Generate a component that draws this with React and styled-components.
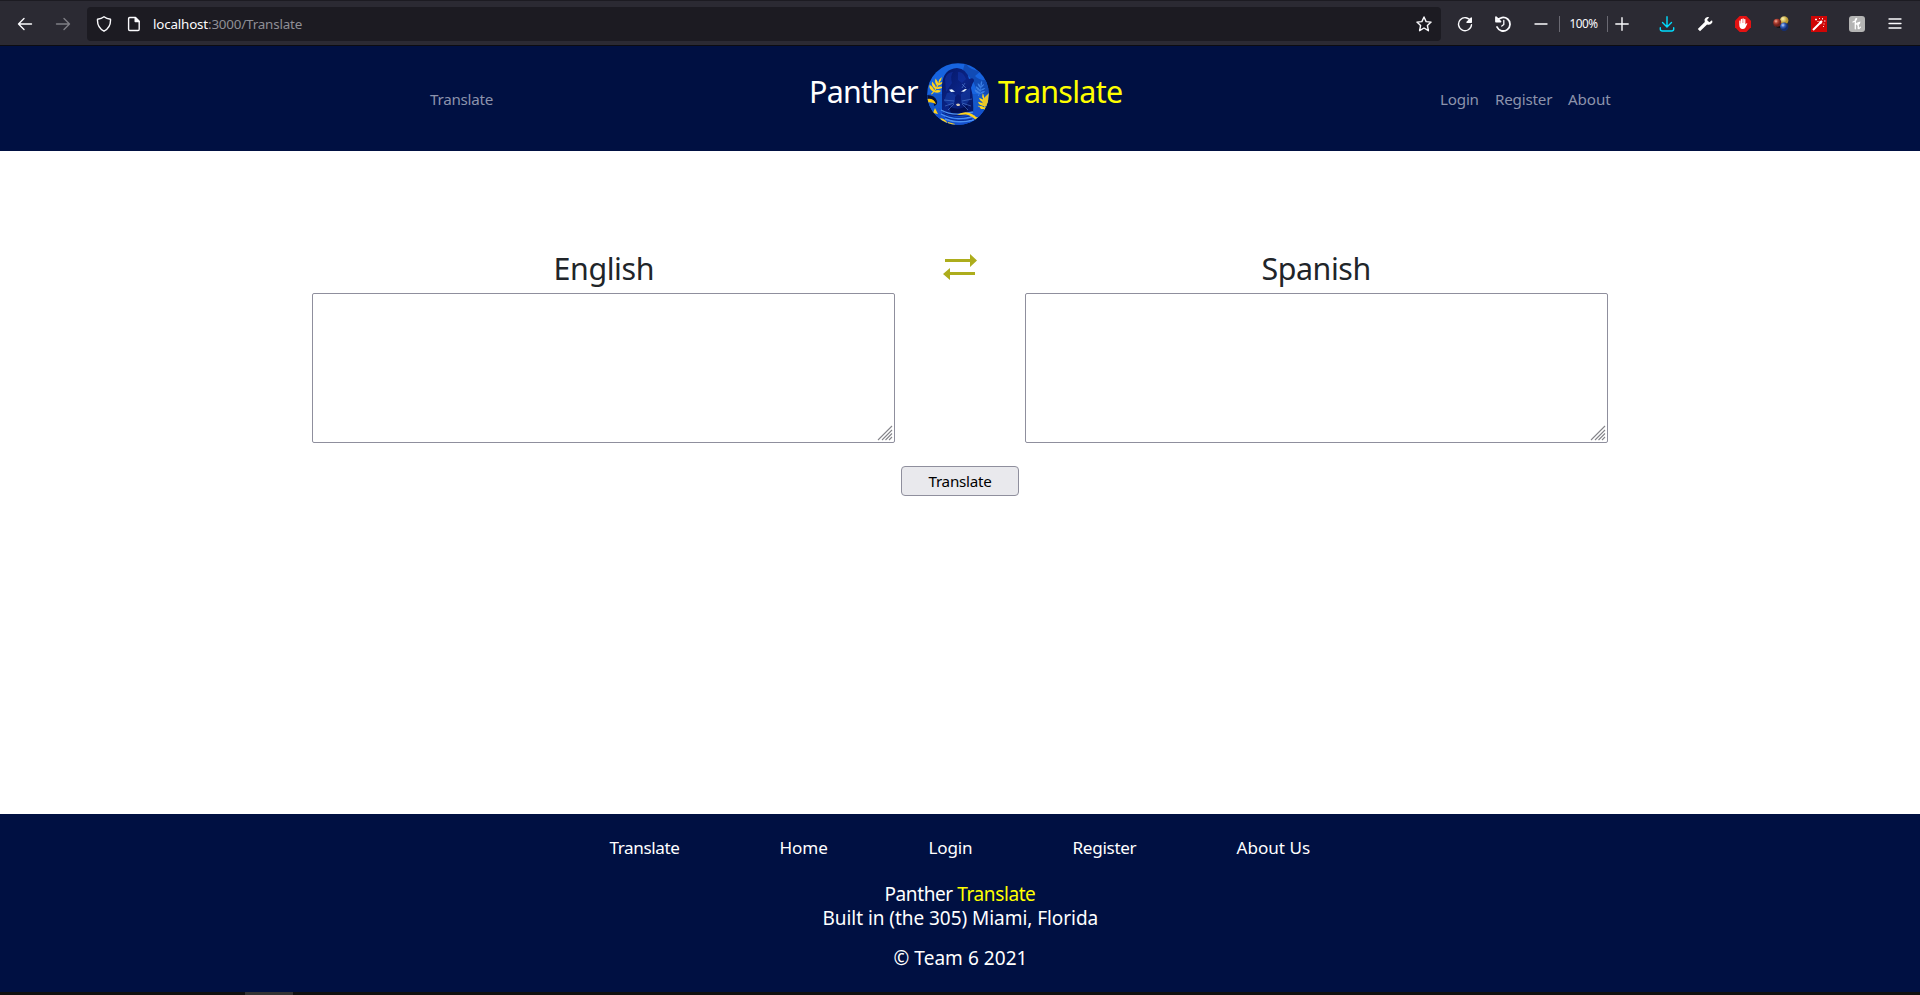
import React from 'react';
import styled, { createGlobalStyle } from 'styled-components';

const GlobalStyle = createGlobalStyle`
  * { box-sizing: border-box; }
  body { margin: 0; background: #fff; font-family: 'Noto Sans', 'Open Sans', sans-serif; overflow: hidden; }
  svg { display: block; }
`;

const Page = styled.div`
  height: 995px;
  display: flex;
  flex-direction: column;
`;

const Text = styled.span`
  display: block;
  flex: none;
  width: ${p => p.$w}px;
  margin: 0 auto;
  font-size: ${p => p.$size}px;
  line-height: ${p => p.$lh || 24}px;
  letter-spacing: ${p => p.$ls || 0}px;
  white-space: nowrap;
  color: ${p => p.$color || 'inherit'};
`;

/* Browser toolbar */
const Toolbar = styled.div`
  flex: none;
  height: 46px;
  display: flex;
  align-items: center;
  padding: 1px 6px 0;
  background: #2b2a33;
  border-top: 1px solid #1c1b22;
  border-bottom: 1px solid #0c0c12;
  color: #fbfbfe;
`;
const Slot = styled.div`
  flex: none;
  width: ${p => p.$w || 38}px;
  height: 34px;
  display: flex;
  align-items: center;
  justify-content: center;
  opacity: ${p => (p.$dim ? 0.4 : 1)};
`;
const AddressBar = styled.div`
  flex: none;
  width: 1354px;
  height: 34px;
  margin: 0 5px;
  display: flex;
  align-items: center;
  border-radius: 4px;
  background: #1c1b22;
`;
const Url = styled.div`
  flex: 1;
  padding: 1px 0 0 4px;
  font-size: 13.4px;
  line-height: 20px;
  letter-spacing: -0.18px;
  color: #8f8f96;
  b { font-weight: 400; color: #fbfbfe; }
`;
const Divider = styled.div`
  width: 1px;
  height: 16px;
  background: #6a6972;
`;
const Zoom = styled.div`
  width: 47px;
  text-align: center;
  font-size: 11.8px;
  line-height: 16px;
  letter-spacing: -0.5px;
  margin-top: -2px;
`;
const Spacer = styled.div`flex: none; width: ${p => p.$w}px;`;

/* Site header */
const Header = styled.header`
  flex: none;
  height: 105px;
  display: flex;
  align-items: flex-start;
  padding-left: 430px;
  background: #001042;
  color: #fff;
`;
const NavLinks = styled.nav`
  display: flex;
  gap: ${p => p.$gap || 0}px;
  padding-top: 41px;
  color: #8c93ac;
`;
const Brand = styled.div`
  display: flex;
  justify-content: space-between;
  width: 314px;
  margin-left: 315px;
  margin-right: 317px;
  padding-top: 17px;
`;
const BrandWord = styled.div`
  flex: none;
  width: ${p => p.$w}px;
  padding-top: 10px;
`;

/* Translator */
const Main = styled.main`
  flex: 1;
  padding-top: 98px;
`;
const Columns = styled.div`
  display: grid;
  grid-template-columns: 583px 130px 583px;
  justify-content: center;
`;
const Heading = styled.h2`
  margin: 0 0 4px;
  font-weight: 400;
  color: #212529;
`;
const Field = styled.div`
  position: relative;
  height: 150px;
`;
const TextArea = styled.textarea`
  display: block;
  width: 100%;
  height: 100%;
  resize: none;
  outline: none;
  border: 1px solid #8f8f9d;
  border-radius: 2px;
  background: #fff;
`;
const Grip = styled.svg`
  position: absolute;
  right: 2px;
  bottom: 2px;
`;
const Swap = styled.div`
  display: flex;
  justify-content: center;
  padding-top: 5px;
`;
const Button = styled.button`
  display: block;
  width: 118px;
  height: 30px;
  margin: 23px auto 0;
  padding: 0;
  border: 1px solid #8f8f9d;
  border-radius: 4px;
  background: #e9e9ed;
  color: #000;
  font-family: inherit;
`;

/* Footer */
const Footer = styled.footer`
  flex: none;
  height: 178px;
  padding-top: 22px;
  background: #001042;
  color: #fff;
`;
const FooterLinks = styled.div`
  display: flex;
  justify-content: center;
  gap: 100px;
  margin-bottom: 22px;
  & > span { margin: 0; }
`;
const Highlight = styled.span`color: #ff0;`;
const Copyright = styled.div`padding-top: 16px;`;
const Taskbar = styled.div`
  flex: none;
  height: 3px;
  padding-left: 245px;
  background: #101010;
`;
const ActiveTask = styled.div`
  width: 48px;
  height: 3px;
  background: #333;
`;

const Line = ({ children, w = 1.4, size = 16 }) => (
  <svg width={size} height={size} viewBox="0 0 16 16" fill="none" stroke="currentColor" strokeWidth={w} strokeLinecap="round" strokeLinejoin="round">{children}</svg>
);

const Leaf = ({ transform, fill }) => (
  <g transform={transform} fill={fill}>
    <path d="M0 0Q3-8 2-17L3-17Q4-8 1 0Z" />
    <path d="M1-3Q-5-4-5-8Q0-7 2-4ZM2-6Q-4-8-4-12Q1-10 3-7ZM2-10Q-2-12-2-16Q2-14 3-11ZM1-3Q7-3 8-7Q4-7 2-4ZM3-7Q7-8 8-11Q4-11 2-7ZM3-11Q6-12 6-16Q3-14 2-11ZM2-14Q1-17 3-20Q4-17 3-14Z" />
  </g>
);

const PantherLogo = () => (
  <svg width="62" height="62" viewBox="0 0 62 62">
    <defs>
      <clipPath id="disc"><circle cx="31" cy="31" r="30.8" /></clipPath>
      <linearGradient id="fur" x1="0" y1="0" x2="1" y2="1">
        <stop offset="0" stopColor="#051663" /><stop offset=".5" stopColor="#0a2385" /><stop offset="1" stopColor="#03135d" />
      </linearGradient>
    </defs>
    <g clipPath="url(#disc)">
      <rect width="62" height="62" fill="#1764df" />
      <path d="M0 31H62V62H0Z" fill="#1458cb" />
      <path d="M38 0Q44 8 54 8L48 13Q52 18 62 17V32L51 30 46 18 36 7Z" fill="#114bb5" />
      <Leaf transform="translate(51 33) rotate(6) scale(.8)" fill="#3b7fe4" />
      <Leaf transform="translate(4 31) rotate(24)" fill="#ffd21b" />
      <path d="M0 32Q8 32 10 38Q11 42 7 43Q8 37 0 36Z" fill="#071139" />
      <path d="M0 36Q7 35 9 41Q3 38 0 40Z" fill="#ffca08" />
      <Leaf transform="translate(57 49) rotate(-12) scale(.93)" fill="#ffda18" />
      <path d="M62 30L56 36 55 42 61 44Z" fill="#e9c729" />
      <path d="M15 22Q16 6 30 5Q40 6 42 16Q47 14 47 18Q45 21 44 25Q47 35 46 53H15Z" fill="url(#fur)" />
      <path d="M18 16Q20 9 26 9Q23 13 25 20L19 29ZM31 9Q36 8 39 16L35 20 31 17Z" fill="#173ab2" opacity=".45" />
      <path d="M20 30L25 29 29 33 28 39 22 42 17 38ZM34 31L43 25 43 36 39 42 34 40Z" fill="#1b47b4" opacity=".45" />
      <path d="M22 43Q31 49 41 42L39 51H24Z" fill="#020f52" />
      <path d="M28 34L31 31 34 34 33 39 31 41 28 39Z" fill="#071b75" />
      <path d="M22 26.8L25 26.2 28 28.7 24 29ZM34 28.5L38 26 40 26.2 37 28.8Z" fill="#e5f4ff" />
      <path d="M29 41.3Q31 40 33 41.2L32.5 43H30Z" fill="#d8c8af" />
      <path d="M27 38L17 37M27 40L18 43M27 41L21 47M35 38L45 36M35 40L44 43M35 41L41 47M35 21L39 25M38 20L35 25" stroke="#5e8fdf" strokeWidth=".5" fill="none" />
      <path d="M12 44Q17 54 32 53T52 43L57 52 45 62H14L8 50Z" fill="#1550cd" />
      <path d="M14 47Q26 54 46 49M14 51Q28 59 48 53M18 56Q30 61 47 57" stroke="#4d91f2" strokeWidth="1.4" fill="none" />
      <path d="M15 50Q28 57 43 53M18 54Q30 60 45 56" stroke="#06288f" strokeWidth=".9" fill="none" />
      <path d="M30 52Q38 47 45 51Q48 54 53 55L50 58Q43 51 38 51.5Z" fill="#ffd21b" />
      <path d="M8 45L11 51 6 50ZM13 55Q19 56 21 61L16 60ZM21 59L28 61 27 63 21 62Z" fill="#ffd21b" />
    </g>
  </svg>
);

const LanguageField = ({ label, width, spacing }) => (
  <div>
    <Heading><Text $w={width} $size={30.4} $lh={40} $ls={spacing}>{label}</Text></Heading>
    <Field>
      <TextArea readOnly aria-label={label} />
      <Grip width="16" height="16" viewBox="0 0 16 16" stroke="#85858b" strokeWidth="1.1">
        <path d="M1 15L15 1M5 15L15 5M8.5 15L15 8.5M12 15L15 12" />
      </Grip>
    </Field>
  </div>
);

export default function App() {
  return (
    <Page>
      <GlobalStyle />
      <Toolbar>
        <Slot><Line><path d="M14.5 8H1.5M7 2.5L1.5 8 7 13.5" /></Line></Slot>
        <Slot $dim><Line><path d="M1.5 8H14.5M9 2.5L14.5 8 9 13.5" /></Line></Slot>
        <AddressBar>
          <Slot $w={34}><Line><path d="M8 .8Q10.5 2.7 14.5 3.2Q15 11.5 8 15.2Q1 11.5 1.5 3.2Q5.5 2.7 8 .8Z" /></Line></Slot>
          <Slot $w={28}><Line><path d="M2.8 1.5H8.5L12.2 5.2V13.2Q12.2 14.5 11 14.5H2.8Q1.6 14.5 1.6 13.2V2.8Q1.6 1.5 2.8 1.5Z" /><path d="M8.2 1.7V5.5H12Z" fill="currentColor" /></Line></Slot>
          <Url><b>localhost</b>:3000/Translate</Url>
          <Slot $w={34}><Line><path d="M8 1L10.1 5.6 15.1 6.1 11.4 9.5 12.4 14.7 8 12 3.6 14.7 4.6 9.5.9 6.1 5.9 5.6Z" /></Line></Slot>
        </AddressBar>
        <Slot><Line><path d="M13.8 5.2A6.5 6.5 0 1 0 14.5 8.7" /><path d="M14.3 2V6.2H10Z" fill="currentColor" /></Line></Slot>
        <Slot><Line w={1.8}><path d="M2.2 5A6.8 6.8 0 1 1 2 11M1 1.2V5.6H5.5Z" /><path d="M8.8 4.5V8.5L6.8 10" strokeWidth="1.3" /></Line></Slot>
        <Slot $w={37}><Line><path d="M2 8H14" /></Line></Slot>
        <Divider /><Zoom>100%</Zoom><Divider />
        <Slot $w={28}><Line><path d="M1.8 8H14.2M8 1.8V14.2" /></Line></Slot>
        <Spacer $w={12} />
        <Slot><svg width="16" height="16" viewBox="0 0 16 16" fill="none" stroke="#00ddff" strokeWidth="1.4" strokeLinecap="round"><path d="M8 .8V10.5M3.5 6.5L8 11 12.5 6.5M1.3 11.8V13Q1.3 15 3.3 15H12.7Q14.7 15 14.7 13V11.8" /></svg></Slot>
        <Slot><svg width="16" height="16" viewBox="0 0 16 16" fill="#fff"><path d="M15 4.2L12.3 6.2 10 3.9 12.2 1.2Q8.7.1 7.5 3.5L7.8 5.9.8 13 3 15.2 10.1 8.5Q13.5 9.3 15.2 6.7Q15.7 5.4 15 4.2Z" /></svg></Slot>
        <Slot><svg width="16" height="16" viewBox="0 0 16 16"><path d="M4.7 0H11.3L16 4.7V11.3L11.3 16H4.7L0 11.3V4.7Z" fill="#e31212" /><path d="M4.3 8.4V4.8Q4.9 4 5.5 4.8V7.4H5.8V3.2Q6.4 2.4 7.1 3.2V7H7.4V2.7Q8.1 2 8.8 2.7V7H9.1V3.3Q9.8 2.6 10.4 3.3V8.4Q11.6 6.9 12.4 7.4L10.5 11.5Q9.5 13 7.5 13Q4.3 12.8 4.3 8.4Z" fill="#fff" /></svg></Slot>
        <Slot><svg width="16" height="16" viewBox="0 0 16 16"><defs><radialGradient id="gold" cx=".35" cy=".3"><stop stopColor="#fff5ae" /><stop offset="1" stopColor="#b99830" /></radialGradient><radialGradient id="red" cx=".35" cy=".3"><stop stopColor="#f5b19b" /><stop offset=".5" stopColor="#b74334" /><stop offset="1" stopColor="#71221c" /></radialGradient><radialGradient id="blue" cx=".35" cy=".3"><stop stopColor="#bdd4ff" /><stop offset=".5" stopColor="#3561bc" /><stop offset="1" stopColor="#142d70" /></radialGradient></defs><ellipse cx="8" cy="10" rx="5" ry="2" fill="#111" /><circle cx="11.2" cy="4.5" r="4.2" fill="url(#gold)" /><circle cx="4.2" cy="6.8" r="4" fill="url(#red)" /><circle cx="11.2" cy="10.8" r="4.2" fill="url(#blue)" /></svg></Slot>
        <Slot><svg width="16" height="16" viewBox="0 0 16 16"><path d="M0 0H16V16H0Z" fill="#cf0505" /><path d="M2 14L11 5M8.5 5.5L10.5 7.5" stroke="#fff" strokeWidth="2" /><path d="M4 3.5H6M5 2.5V4.5M8 2.5H9M11.5 2V3.5M13 5H14.5M12.5 8H13.5M12 10.5H13M6.5 5.5H7.5" stroke="#fff" strokeWidth=".9" /></svg></Slot>
        <Slot><svg width="16" height="16" viewBox="0 0 16 16"><rect width="16" height="16" rx="3" fill="#b4b4b4" /><path d="M4 6Q7.5 4.5 7.6 2.7Q6.3 2.5 6.3 5V12.8M6.4 9Q7.5 6.7 10.7 6.3Q10.5 8.5 8.2 8.7Q9.8 9 9.2 12.3Q10 13 11.4 11.2" fill="none" stroke="#fff" strokeWidth="1.3" strokeLinecap="round" /></svg></Slot>
        <Slot><Line w={1.3}><path d="M2 3H14M2 7.5H14M2 12H14" /></Line></Slot>
      </Toolbar>

      <Header>
        <NavLinks><Text $w={64} $size={15.2} $ls={-0.25}>Translate</Text></NavLinks>
        <Brand>
          <BrandWord $w={108}><Text $w={108} $size={30.4} $lh={38} $ls={-0.7}>Panther</Text></BrandWord>
          <PantherLogo />
          <BrandWord $w={125}><Text $w={125} $size={30.4} $lh={38} $ls={-0.7} $color="#ff0">Translate</Text></BrandWord>
        </Brand>
        <NavLinks $gap={16}>
          <Text $w={39} $size={15.2} $ls={-0.2}>Login</Text>
          <Text $w={57} $size={15.2} $ls={-0.2}>Register</Text>
          <Text $w={45} $size={15.2} $ls={-0.1}>About</Text>
        </NavLinks>
      </Header>

      <Main>
        <Columns>
          <LanguageField label="English" width={100} spacing={-0.4} />
          <Swap>
            <svg width="34" height="26" viewBox="0 0 34 26" fill="#adad1c">
              <path d="M2 5H27V0L34 6.5 27 13V8H2ZM7 14V18H32V21H7V26L0 20Z" />
            </svg>
          </Swap>
          <LanguageField label="Spanish" width={110} spacing={-0.45} />
        </Columns>
        <Button><Text $w={64} $size={15.2} $ls={-0.25}>Translate</Text></Button>
      </Main>

      <Footer>
        <FooterLinks>
          <Text $w={70} $size={17.1} $ls={-0.4}>Translate</Text>
          <Text $w={49} $size={17.1} $ls={-0.1}>Home</Text>
          <Text $w={44} $size={17.1} $ls={-0.2}>Login</Text>
          <Text $w={64} $size={17.1} $ls={-0.3}>Register</Text>
          <Text $w={74} $size={17.1} $ls={0}>About Us</Text>
        </FooterLinks>
        <Text $w={151} $size={19} $ls={-0.4}>Panther <Highlight>Translate</Highlight></Text>
        <Text $w={275} $size={19} $ls={-0.05}>Built in (the 305) Miami, Florida</Text>
        <Copyright><Text $w={133} $size={19} $ls={0.05}>© Team 6 2021</Text></Copyright>
      </Footer>
      <Taskbar><ActiveTask /></Taskbar>
    </Page>
  );
}
